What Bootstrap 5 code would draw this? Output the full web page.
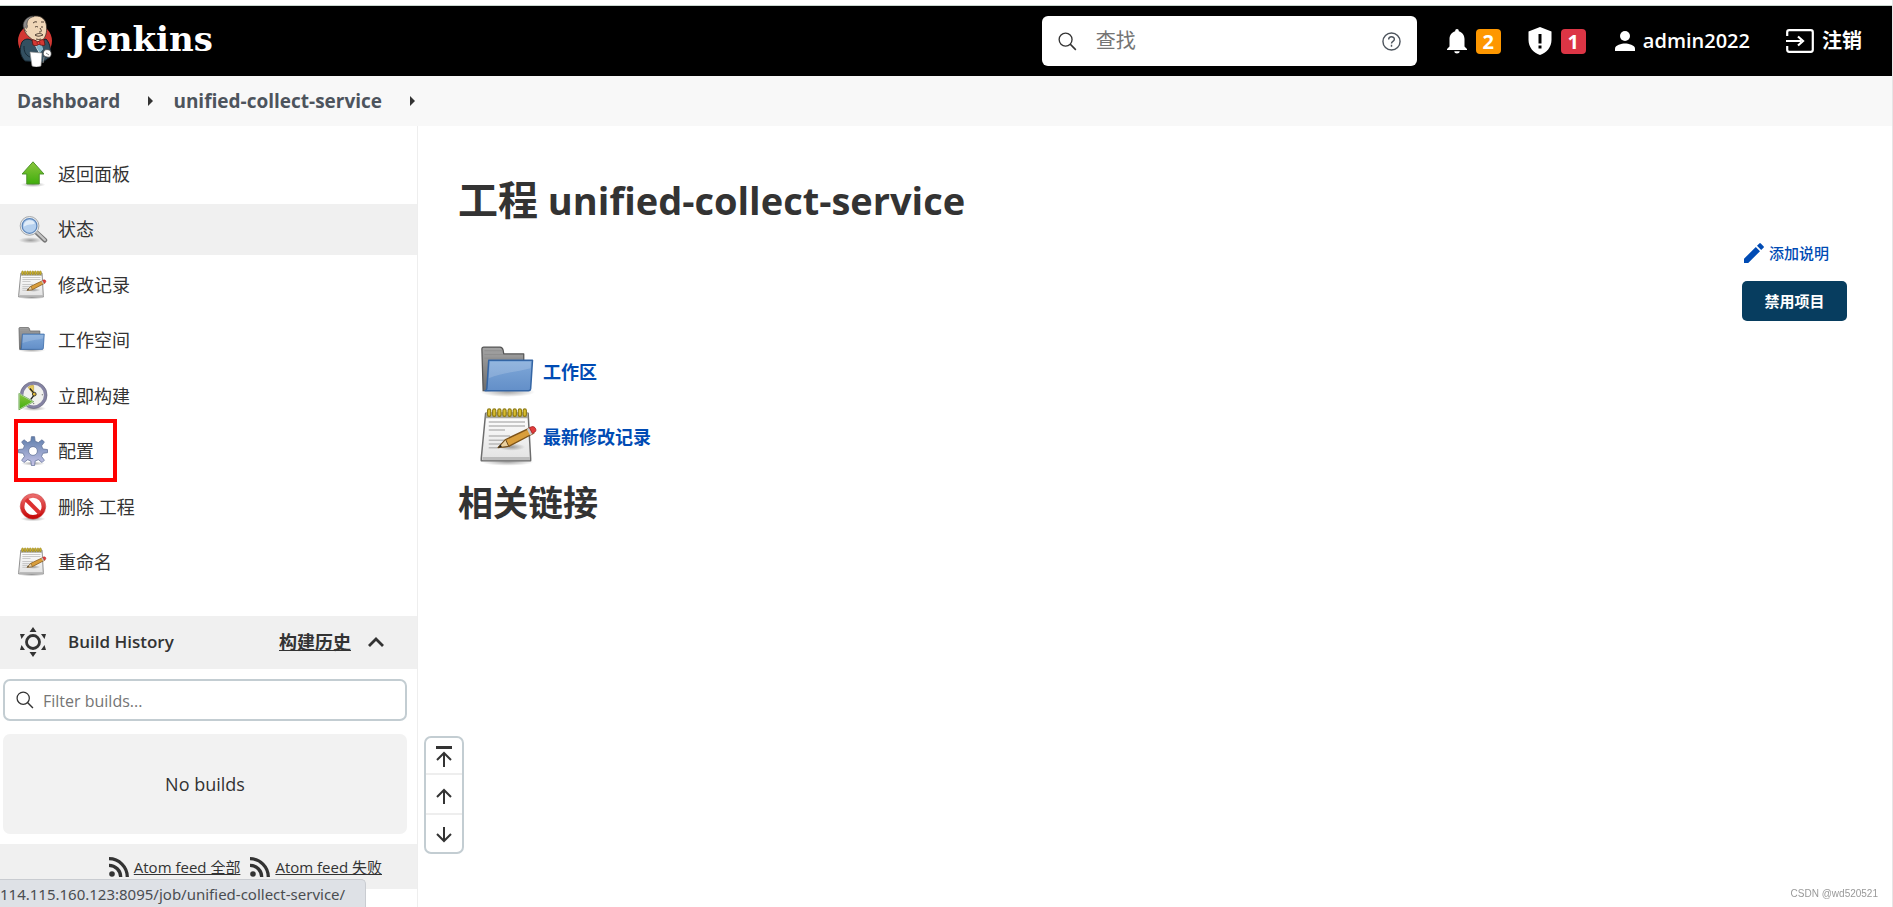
<!DOCTYPE html>
<html lang="zh-CN">
<head>
<meta charset="utf-8">
<meta name="viewport" content="width=device-width, initial-scale=1">
<title>unified-collect-service [Jenkins]</title>
<link href="https://cdn.jsdelivr.net/npm/bootstrap@5.3.0/dist/css/bootstrap.min.css" rel="stylesheet">
<style>
  body { font-family: "Open Sans", "Noto Sans CJK SC", sans-serif; font-size: 18px; line-height: 24px; color: #333; background: #fff; }
  a { color: inherit; text-decoration: none; }
  .shell { min-height: 100vh; padding-top: 5px; border-right: 1px solid #e6e6e6; }
  .topbar { height: 71px; border-top: 1px solid #c9d6cf; background: #000; color: #fff; font-size: 20px; font-weight: 700; padding: 0 30px 0 16px; }
  .wordmark { font-family: "DejaVu Serif", serif; font-size: 34px; line-height: 40px; font-weight: 700; margin: -5px 0 0 16px; }
  .searchbox { width: 375px; height: 50px; background: #fff; border-radius: 6px; color: #333; padding: 0 16px; margin-right: 30px; }
  .searchbox input { font-size: 20px; padding: 0 0 0 19px; }
  .searchbox input::placeholder, .filterbox input::placeholder { color: #757575; opacity: 1; }
  .count { width: 25px; height: 25px; line-height: 25px; border-radius: 4px; text-align: center; margin-left: 9px; }
  .count-warn { background: #fe9700; margin-right: 27px; }
  .count-danger { background: #dc3545; margin-right: 29px; }
  .username { font-weight: 600; margin-right: 36px; }
  .crumbs { height: 50px; background: #f8f8f8; color: #4d545d; padding: 0 17px; font-size: 19px; font-weight: 700; }
  .crumbs svg { margin: 0 19px 0 28px; }
  .side { width: 418px; border-right: 1px solid #eee; padding-top: 22px; }
  .tasks { height: 440px; margin-bottom: 28px; }
  .tasks a { height: 51px; padding: 0 18px; gap: 10px; }
  .tasks a.current { background: #f0f0f0; }
  .marker { left: 14px; top: -7px; width: 103px; height: 63px; border: 4px solid #f00; pointer-events: none; }
  .history-head { height: 53px; background: #f0f0f0; padding: 0 32px 2px 19px; font-weight: 600; }
  .history-title { font-size: 17px; padding-left: 21px; }
  .filterbox { height: 42px; margin: 10px 10px 13px 3px; border: 2px solid #c3cdd2; border-radius: 7px; padding: 0 11px; }
  .filterbox input { font-size: 16px; padding: 2px 0 0 9px; }
  .nobuilds { height: 100px; margin: 0 10px 10px 3px; background: #f2f2f2; border-radius: 7px; }
  .feeds { height: 45px; background: #f0f0f0; padding: 0 35px 0 0; gap: 10px; font-size: 15px; }
  .feeds a { gap: 5px; }
  .content { padding: 50px 45px 0 40px; }
  .content h1 { font-size: 38px; line-height: 48px; font-weight: 700; }
  .content h1 span { font-size: 40px; }
  .content h2 { font-size: 35px; line-height: 48px; font-weight: 700; }
  .blue { color: #004bb4; font-weight: 700; }
  .actions { font-size: 15px; margin-top: 17px; }
  .actions .blue { gap: 5px; margin-right: 18px; font-weight: 500; }
  .btn-disable { width: 105px; height: 40px; padding: 0; background: #073d5f; color: #fff; font-size: 15px; font-weight: 700; border: 0; border-radius: 5px; margin-top: 16px; }
  .btn-disable:hover { background: #0a4a72; color: #fff; }
  .shortcuts { padding: 21px 0 12px 22px; gap: 5px; }
  .shortcuts a { gap: 3px; height: 60px; }
  .scroller { left: 424px; bottom: 53px; width: 40px; height: 118px; border: 2px solid #c3cdd2; border-radius: 7px; background: #fff; }
  .scroller button { border: 0; background: none; padding: 0; color: #333; flex: 1 1 0; line-height: 20px; }
  .scroller button:first-child { flex: 0 0 35px; }
  .scroller button + button { border-top: 2px solid #eee; }
  .statusbar { left: 0; bottom: 0; width: 366px; height: 28px; background: #dee1e6; border: 1px solid #c9ccd1; border-width: 1px 1px 0 0; border-radius: 0 5px 0 0; color: #4a4d51; font-family: "Noto Sans", sans-serif; font-size: 15px; line-height: 28px; white-space: nowrap; }
  .credit { right: 15px; bottom: 5px; color: #999; font: 10px/16px "Liberation Sans", sans-serif; }
</style>
</head>
<body>
<svg width="0" height="0" class="position-absolute" aria-hidden="true">
  <defs>
    <linearGradient id="gGreen" x1="0" y1="0" x2="0" y2="1"><stop offset="0" stop-color="#8cc63e"/><stop offset="1" stop-color="#3fae0c"/></linearGradient>
    <linearGradient id="gBlue" x1="0" y1="0" x2="0" y2="1"><stop offset="0" stop-color="#7fa8d9"/><stop offset="1" stop-color="#638fc8"/></linearGradient>
    <linearGradient id="gGrey" x1="0" y1="0" x2="0" y2="1"><stop offset="0" stop-color="#a4a4a4"/><stop offset="1" stop-color="#6d6d6d"/></linearGradient>
    <linearGradient id="gPaper" x1="0" y1="0" x2="0" y2="1"><stop offset="0" stop-color="#fff"/><stop offset="1" stop-color="#e2e2e2"/></linearGradient>
    <linearGradient id="gGear" x1="0" y1="0" x2="0" y2="1"><stop offset="0" stop-color="#5c7dab"/><stop offset="1" stop-color="#c9c5e8"/></linearGradient>
    <linearGradient id="gRed" x1="0" y1="0" x2="0" y2="1"><stop offset="0" stop-color="#ea6a6a"/><stop offset="1" stop-color="#c80a0a"/></linearGradient>
    <radialGradient id="gShade"><stop offset="0" stop-color="#000" stop-opacity=".35"/><stop offset="1" stop-color="#000" stop-opacity="0"/></radialGradient>
  </defs>
  <symbol id="i-up" viewBox="0 0 48 48"><ellipse cx="24" cy="41" rx="20" ry="4" fill="url(#gShade)"/><path d="M24 4.500 41.500 24H34v16H14V24H6.500z" fill="url(#gGreen)" stroke="#4a8f28" stroke-width="1.500" stroke-linejoin="round"/></symbol>
  <symbol id="i-search" viewBox="0 0 48 48"><ellipse cx="20" cy="42" rx="19" ry="5" fill="url(#gShade)"/><path d="m29 29 14 13" stroke="#777" stroke-width="7.500" stroke-linecap="round"/><path d="m30 29 13 12.500" stroke="#c4c4c4" stroke-width="3.500" stroke-linecap="round"/><circle cx="18.500" cy="19" r="15" fill="#e9ecef" stroke="#a3a5a6" stroke-width="1.500"/><circle cx="18.500" cy="19" r="11.800" fill="#b5d0ee" stroke="#5b85ba" stroke-width="2"/><path d="M9.500 20c-.5-6 4-10 9-10 4 0 7 2 8.500 5-5 3-10 0-17.500 5z" fill="#e1edf9"/></symbol>
  <symbol id="i-pad" viewBox="0 0 48 48"><ellipse cx="22" cy="44" rx="21" ry="3" fill="url(#gShade)"/><path d="M4.500 5h34l2 36v2H1v-2z" fill="url(#gPaper)" stroke="#6d6d6d" stroke-width="1.200" stroke-linejoin="round"/><path d="M4.800 4.500h33.400l.4 4.500H4.500z" fill="#a8a8a0"/><path d="M2 40h38v2.500H2z" fill="#bcbcbc"/><g fill="#d9bd2e" stroke="#8e7a10" stroke-width=".9"><rect x="6" y="1.500" width="2.600" height="6" rx="1.300"/><rect x="10.100" y="1.500" width="2.600" height="6" rx="1.300"/><rect x="14.200" y="1.500" width="2.600" height="6" rx="1.300"/><rect x="18.300" y="1.500" width="2.600" height="6" rx="1.300"/><rect x="22.400" y="1.500" width="2.600" height="6" rx="1.300"/><rect x="26.500" y="1.500" width="2.600" height="6" rx="1.300"/><rect x="30.600" y="1.500" width="2.600" height="6" rx="1.300"/><rect x="34.500" y="1.500" width="2.600" height="6" rx="1.300"/></g><path d="M7 12h29M7 15.200h29M7 18.300h13M7 23.200h17M7 26.500h13M7 29.500h10M7 32.500h7" stroke="#b9b9b9" stroke-width="1.200"/><ellipse cx="25" cy="32" rx="11" ry="3" fill="url(#gShade)"/><path d="m14.500 32.500 6-6.500 20-9.500 2.500 4.500-20 10.500z" fill="#d99e3c" stroke="#7d531a" stroke-width="1.100" stroke-linejoin="round"/><path d="m14.500 32.500 6-6.500 2.500 5.500z" fill="#ead0a0" stroke="#6c4a1c" stroke-width=".8"/><path d="m14.500 32.500 2-2.300 1 1.500z" fill="#222"/><path d="m37.500 17.500 3-1.500 2.500 5-3 1.500z" fill="#c9c9c9"/><path d="m39.500 16.500 2.200-.8c2.500-.3 4 3 2.200 4.300l-2 1.200z" fill="#e33d3d" stroke="#a32020" stroke-width=".7"/></symbol>
  <symbol id="i-folder" viewBox="0 0 48 48"><ellipse cx="22" cy="40" rx="22" ry="4" fill="url(#gShade)"/><path d="M2.500 39 1.500 5.500Q1.500 4 3 4H16q2 0 2.500 2.500L19 9.500h16V38z" fill="url(#gGrey)" stroke="#555" stroke-width="1" stroke-linejoin="round"/><path d="M3.500 7h14M3.500 10h15M3.500 13h31" stroke="#8f8f8f" stroke-width=".8"/><path d="M7 14.500h35L40.500 37.500q-.2 1.500-1.700 1.500H4q1.200 0 1.500-2z" fill="url(#gBlue)" stroke="#3465a4" stroke-width="1.200" stroke-linejoin="round"/><path d="M8 16h32.800L40.500 21c-10 3-22 3-33.500 8z" fill="#fff" opacity=".17"/></symbol>
  <symbol id="i-clock" viewBox="0 0 48 48"><ellipse cx="25" cy="44" rx="20" ry="4" fill="url(#gShade)"/><circle cx="25" cy="22.500" r="19" fill="#f1f1ee" stroke="#8583a3" stroke-width="5"/><circle cx="25" cy="22.500" r="21.500" fill="none" stroke="#58586c" stroke-width=".8"/><path d="m25 22-9-12q5-4 9-3z" fill="#e4c85c" stroke="#b49528" stroke-width=".8"/><path d="m27 21-8-9m8 9-7 9" stroke="#222" stroke-width="2"/><circle cx="26" cy="21" r="3" fill="#e1b838" stroke="#333" stroke-width="1.500"/><circle cx="39" cy="22" r="1.200" fill="#888"/><circle cx="25" cy="36" r="1.200" fill="#888"/><path d="M1.500 20v26L25 33z" fill="url(#gGreen)" stroke="#f1f8ea" stroke-width="2"/><path d="M1.500 20v26L25 33z" fill="none" stroke="#3d8a20" stroke-width="1"/></symbol>
  <symbol id="i-gear" viewBox="0 0 48 48"><ellipse cx="24" cy="44" rx="19" ry="3.500" fill="url(#gShade)"/><g fill="url(#gGear)" stroke="#5e6f96" stroke-width="1.200" stroke-linejoin="round"><path fill-rule="evenodd" d="M20.500 8.500 21.500 1h5l1 7.500 5 2 6-4.500 3.700 3.700-4.500 6 2 5 7.500 1v5l-7.500 1-2 5 4.500 6-3.700 3.700-6-4.500-5 2-1 7.500h-5l-1-7.500-5-2-6 4.500-3.700-3.700 4.500-6-2-5-7.500-1v-5l7.500-1 2-5-4.500-6L9.500 6l6 4.500zM24 17a7 7 0 1 0 .01 0z"/></g></symbol>
  <symbol id="i-stop" viewBox="0 0 48 48"><ellipse cx="24" cy="43" rx="20" ry="4" fill="url(#gShade)"/><circle cx="24" cy="23" r="17" fill="#fff" stroke="url(#gRed)" stroke-width="6.500"/><path d="m13 12 22 22" stroke="#dc3030" stroke-width="6.500"/><circle cx="24" cy="23" r="20.500" fill="none" stroke="#b82020" stroke-width=".7"/></symbol>
  <symbol id="i-lens" viewBox="0 0 20 20"><circle cx="8" cy="8" r="6.800" fill="none" stroke="currentColor" stroke-width="1.400"/><path d="m12.800 12.800 6 6" stroke="currentColor" stroke-width="1.600"/></symbol>
  <symbol id="i-rss" viewBox="0 0 20 20"><circle cx="3" cy="17" r="2.800" fill="currentColor"/><path d="M0 8.300A11.700 11.700 0 0 1 11.700 20M0 1.700A18.300 18.300 0 0 1 18.300 20" fill="none" stroke="currentColor" stroke-width="3.300"/></symbol>
</svg>

<div class="shell d-flex flex-column">
  <header class="topbar d-flex align-items-center">
    <a href="#" class="d-flex align-items-center me-auto" aria-label="Jenkins">
      <svg width="38" height="52" viewBox="0 0 38 52">
        <circle cx="19" cy="26" r="17" fill="#d33833"/>
        <path d="M6 27c3-4 7-3 9-2l7 2 8-3c5 5 5 14 4 18l-7 5-18-1c-5-5-6-12-3-19z" fill="#335061" stroke="#14222b" stroke-width="1"/>
        <path d="M8 11c0-5 4-10 11-10 7-.5 11 4 11.500 10 .5 6-.5 11-4 14-4 3-9 1-12-2-4-3-7-7-6.500-12z" fill="#f0d6b7" stroke="#3c332c" stroke-width=".8"/>
        <path d="M9 15C5 11 8 4 13 2c2-1 4-1 5-.5-5 1-7 4-7 8 1 2 0 4-2 5.500z" fill="#8c8a89" stroke="#333" stroke-width=".6"/>
        <path d="M10 12c-2 0-1.500 4 1 5" fill="#f0d6b7" stroke="#5e4d40" stroke-width=".7"/>
        <path d="M17 8q2-2 4-1m4 0 3 0M19 12q1.500-1 3 0m3 0h2m-3 1c2 3 2 4-1 4m-4 3c3-2 6-2 8 0-3 1-5 2-8 0zm1 4q3 1 5 0" fill="none" stroke="#3f3026" stroke-width=".9"/>
        <path d="m17 27 5-1 5 8-4 4z" fill="#eef3f6"/><path d="m20 32 2-3 4 1 1 4-3 4z" fill="#81b0c4"/>
        <path d="M16 25c2-1 4 1 6 2 2-2 4-3 6-2l1 5c-2 1-5 0-6-1-2 2-4 2-6 1z" fill="#d33833" stroke="#5b1412" stroke-width=".8"/><circle cx="22.500" cy="28" r="1.500" fill="#ef3d3a" stroke="#5b1412" stroke-width=".5"/>
        <path d="m14 37 12 1-1 13q-5 2-9 0z" fill="#fff" stroke="#8f8f8f" stroke-width=".6"/>
        <path d="M28 36c1-2 6-2 7 1 1 4-1 6-4 5-3 0-5-3-3-6z" fill="#fff" stroke="#333" stroke-width=".8"/><path d="m30 38 3 2m-5 2-1 6" stroke="#888" stroke-width="1"/>
        <path d="M8 31c0 5 1 9 6 11" fill="none" stroke="#172a36" stroke-width="1"/>
      </svg>
      <span class="wordmark">Jenkins</span>
    </a>
    <label class="searchbox d-flex align-items-center">
      <svg width="19" height="19"><use href="#i-lens"/></svg>
      <input type="search" class="border-0 bg-transparent flex-grow-1" placeholder="查找" aria-label="查找">
      <a href="#" class="d-flex" aria-label="帮助"><svg width="19" height="19" viewBox="0 0 20 20" fill="none" stroke="#4d545d"><circle cx="10" cy="10" r="9" stroke-width="1.500"/><path d="M7 8c0-4 6-4 6-.3 0 2.300-3 2-3 4.300M10 13.500v2" stroke-width="1.500"/></svg></a>
    </label>
    <a href="#" class="d-flex align-items-center" aria-label="通知">
      <svg width="20" height="25" viewBox="0 0 20 25" fill="#fff"><path d="M10 0c1.200 0 1.800.8 1.800 2.200C15.500 3.300 17.500 6.500 17.500 10v7.500L20 20v1H0v-1l2.500-2.500V10c0-3.500 2-6.700 5.700-7.800C8.200.8 8.800 0 10 0zM7.300 22.200h5.400c0 3-5.400 3-5.400 0z"/></svg>
      <span class="count count-warn">2</span></a>
    <a href="#" class="d-flex align-items-center" aria-label="安全警告">
      <svg width="24" height="28" viewBox="0 0 24 28" fill="#fff"><path fill-rule="evenodd" d="m12 0 11.500 4.500v8.500c0 7-5 13-11.500 15C5.500 26 .5 20 .5 13V4.500zM10.500 7v9.500h3V7zm0 11.500v3h3v-3z"/></svg>
      <span class="count count-danger">1</span></a>
    <a href="#" class="d-flex align-items-center">
      <svg width="20" height="20" viewBox="0 0 20 20" fill="#fff"><circle cx="10" cy="5" r="5"/><path d="M0 20v-2.500c0-3.300 6.700-5 10-5s10 1.700 10 5V20z"/></svg>
      <span class="username ms-2">admin2022</span></a>
    <a href="#" class="d-flex align-items-center">
      <svg width="28" height="24" viewBox="0 0 28 24" fill="none" stroke="#fff" stroke-width="2.200"><path d="M1.200 7V3.200q0-2 2-2h21.600q2 0 2 2v17.600q0 2-2 2H3.200q-2 0-2-2V17M0 12h15M12 7.500l5 4.500-5 4.500"/></svg>
      <span class="ms-2">注销</span></a>
  </header>

  <nav class="crumbs d-flex align-items-center" aria-label="breadcrumb">
    <a href="#">Dashboard</a>
    <svg width="6" height="10" viewBox="0 0 6 10"><path d="M0 0l5 5-5 5z" fill="#333"/></svg>
    <a href="#">unified-collect-service</a>
    <svg width="6" height="10" viewBox="0 0 6 10"><path d="M0 0l5 5-5 5z" fill="#333"/></svg>
  </nav>

  <div class="d-flex flex-grow-1">
    <aside class="side flex-shrink-0">
      <nav class="tasks d-flex flex-column justify-content-between">
        <a href="#" class="d-flex align-items-center"><svg width="30" height="30"><use href="#i-up"/></svg>返回面板</a>
        <a href="#" class="current d-flex align-items-center"><svg width="30" height="30"><use href="#i-search"/></svg>状态</a>
        <a href="#" class="d-flex align-items-center"><svg width="30" height="30"><use href="#i-pad"/></svg>修改记录</a>
        <a href="#" class="d-flex align-items-center"><svg width="30" height="30"><use href="#i-folder"/></svg>工作空间</a>
        <a href="#" class="d-flex align-items-center"><svg width="30" height="30"><use href="#i-clock"/></svg>立即构建</a>
        <a href="#" class="d-flex align-items-center position-relative"><svg width="30" height="30"><use href="#i-gear"/></svg>配置<span class="marker position-absolute"></span></a>
        <a href="#" class="d-flex align-items-center"><svg width="30" height="30"><use href="#i-stop"/></svg>删除 工程</a>
        <a href="#" class="d-flex align-items-center"><svg width="30" height="30"><use href="#i-pad"/></svg>重命名</a>
      </nav>
      <section>
        <div class="history-head d-flex align-items-center">
          <svg width="28" height="30" viewBox="0 0 28 30" fill="#333"><circle cx="14" cy="15" r="6.500" fill="none" stroke="#333" stroke-width="2.800"/><path d="m14 0 3.500 5h-7zM14 30l3.500-5h-7zM1 7h5l-3.500 5zM27 7h-5l3.500 5zM1 23h5l-3.500-5zM27 23h-5l3.500-5z"/></svg>
          <span class="history-title me-auto">Build History</span>
          <a href="#" class="text-decoration-underline">构建历史</a>
          <svg class="ms-3" width="18" height="12" viewBox="0 0 18 12"><path d="m2 10 7-7 7 7" fill="none" stroke="#333" stroke-width="2.800"/></svg>
        </div>
        <label class="filterbox d-flex align-items-center">
          <svg width="18" height="18"><use href="#i-lens"/></svg>
          <input type="search" class="border-0 bg-transparent flex-grow-1" placeholder="Filter builds..." aria-label="Filter builds">
        </label>
        <div class="nobuilds d-flex align-items-center justify-content-center">No builds</div>
        <div class="feeds d-flex align-items-center justify-content-end">
          <a href="#" class="d-flex align-items-center"><svg width="20" height="20"><use href="#i-rss"/></svg><span class="text-decoration-underline">Atom feed 全部</span></a>
          <a href="#" class="d-flex align-items-center"><svg width="20" height="20"><use href="#i-rss"/></svg><span class="text-decoration-underline">Atom feed 失败</span></a>
        </div>
      </section>
    </aside>

    <main class="content flex-grow-1">
      <h1 class="m-0"><span>工程</span> unified-collect-service</h1>
      <div class="actions d-flex flex-column align-items-end">
        <a href="#" class="blue d-flex align-items-center"><svg width="20" height="20" viewBox="0 0 20 20" fill="#004bb4"><path d="M0 15.800V20h4.200L16 8.200 11.800 4zM13 2.800 17.200 7l2.300-2.300q.8-.8 0-1.500L16.800.5q-.8-.8-1.500 0z"/></svg>添加说明</a>
        <button type="button" class="btn btn-disable">禁用项目</button>
      </div>
      <div class="shortcuts d-flex flex-column align-items-start">
        <a href="#" class="blue d-flex align-items-center"><svg width="60" height="60"><use href="#i-folder"/></svg>工作区</a>
        <a href="#" class="blue d-flex align-items-center"><svg width="60" height="60"><use href="#i-pad"/></svg>最新修改记录</a>
      </div>
      <h2 class="m-0">相关链接</h2>
    </main>
  </div>
</div>

<div class="scroller position-fixed d-flex flex-column">
  <button type="button" aria-label="顶部"><svg width="16" height="21" viewBox="0 0 16 21" fill="none" stroke="#333" stroke-width="2"><path d="M0 1.500h16" stroke-width="3"/><path d="M8 21V7M1 14l7-7 7 7"/></svg></button>
  <button type="button" aria-label="向上"><svg width="16" height="16" viewBox="0 0 16 16" fill="none" stroke="#333" stroke-width="2"><path d="M8 16V2M1 9l7-7 7 7"/></svg></button>
  <button type="button" aria-label="向下"><svg width="16" height="16" viewBox="0 0 16 16" fill="none" stroke="#333" stroke-width="2"><path d="M8 0v14M1 7l7 7 7-7"/></svg></button>
</div>
<div class="statusbar position-fixed">114.115.160.123:8095/job/unified-collect-service/</div>
<div class="credit position-fixed">CSDN @wd520521</div>
<script src="https://cdn.jsdelivr.net/npm/bootstrap@5.3.0/dist/js/bootstrap.bundle.min.js"></script>
</body>
</html>
